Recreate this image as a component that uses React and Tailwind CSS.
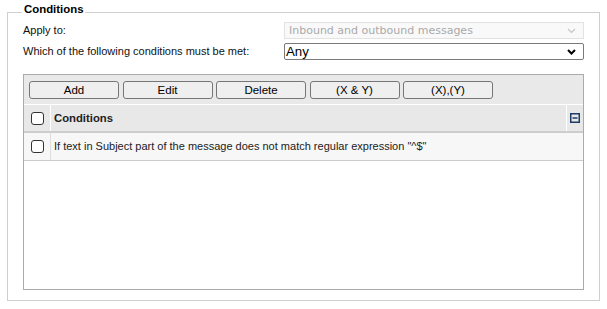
import React from "react";

const Chevron = ({ color = "#000", w = 1.8 }) => (
  <svg width="9" height="6" viewBox="0 0 9 6" className="shrink-0">
    <path d="M1 1 L4.5 4.5 L8 1" fill="none" stroke={color} strokeWidth={w} />
  </svg>
);

const Check = () => (
  <div className="w-[13px] h-[13px] rounded-[3px] border border-[#333] bg-white" />
);

const Btn = ({ children }) => (
  <button className="w-[90px] h-[18px] rounded-[3px] border border-[#767676] bg-[#efefef] text-[11.5px] leading-[16px] text-black flex items-center justify-center">
    {children}
  </button>
);

export default function App() {
  return (
    <div className="bg-white w-[607px] h-[309px] pt-[2px] font-['Liberation_Sans',Arial,sans-serif] text-[11px] text-[#111]">
      <fieldset className="mx-[7px] border border-[#cfcfcf] pl-[15px] pr-[15px] pb-[10px] pt-0">
        <legend className="-ml-[1px] px-[2px] pb-[5px] font-bold text-[11.4px] leading-[15px] text-black">
          Conditions
        </legend>
        <div className="flex items-center justify-between h-[17px]">
          <span>Apply to:</span>
          <div className="w-[300px] h-[17px] border border-[#e2e2e2] bg-[#f9f9f9] flex items-center justify-between pl-[4px] pr-[7px]">
            <span className="font-['DejaVu_Sans',sans-serif] text-[11px] text-[#a9a9a9] leading-[15px]">
              Inbound and outbound messages
            </span>
            <Chevron color="#c4c4c4" w={1.1} />
          </div>
        </div>
        <div className="flex items-center justify-between h-[17px] mt-[4px]">
          <span>Which of the following conditions must be met:</span>
          <div className="w-[300px] h-[17px] border border-[#7a7a7a] rounded-[2px] bg-white flex items-center justify-between pl-[1px] pr-[7px]">
            <span className="text-[13.3px] text-black leading-[15px]">Any</span>
            <Chevron color="#000" w={2} />
          </div>
        </div>
        <div className="mt-[14px] h-[216px] border border-[#ababab] flex flex-col">
          <div className="h-[29px] bg-[#e9e9e9] flex items-start pt-[6px] pl-[5px] gap-[3.5px]">
            <Btn>Add</Btn>
            <Btn>Edit</Btn>
            <Btn>Delete</Btn>
            <Btn>(X &amp; Y)</Btn>
            <Btn>(X),(Y)</Btn>
          </div>
          <div className="h-[29px] border-t border-white border-b-2 border-b-[#cdcdcd] bg-[#e8e8e8] flex">
            <div className="w-[27px] flex items-center justify-center border-r border-white pl-[1px]">
              <Check />
            </div>
            <div className="flex-1 flex items-center pl-[3px] font-bold text-[11.3px] text-[#222]">
              Conditions
            </div>
            <div className="w-[17px] border-l border-white flex items-center justify-center">
              <svg width="10" height="10" viewBox="0 0 10 10">
                <rect x="0.75" y="0.75" width="8.5" height="8.5" fill="none" stroke="#1d3c66" strokeWidth="1.5" />
                <path d="M2.5 5 H7.5" stroke="#1d3c66" strokeWidth="1.5" />
              </svg>
            </div>
          </div>
          <div className="h-[28px] border-b border-[#cbcbcb] bg-[#f7f7f7] flex">
            <div className="w-[27px] flex items-center justify-center border-r border-[#dedede] pl-[1px]">
              <Check />
            </div>
            <div className="flex-1 flex items-center pl-[3px] text-[#222]">
              If text in Subject part of the message does not match regular expression "^$"
            </div>
          </div>
          <div className="flex-1 bg-white" />
        </div>
      </fieldset>
    </div>
  );
}
